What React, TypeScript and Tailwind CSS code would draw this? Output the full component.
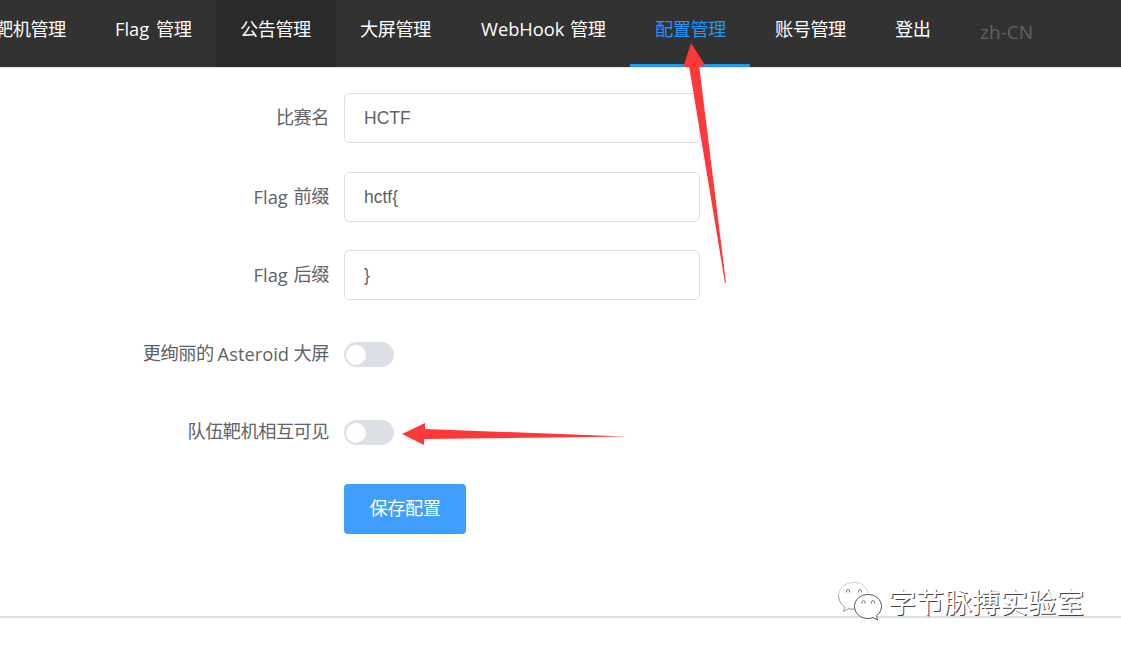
import React from "react";

const navItems = [
  { label: "靶机管理", box: "w-[121px] pl-[25px]" },
  { label: "Flag 管理", latin: "Flag", rest: "管理", latinBox: "w-[38px]", box: "w-[125px] pl-[24px]" },
  { label: "公告管理", box: "w-[120px] pl-[24px] bg-[#2a2a2a]" },
  { label: "大屏管理", box: "w-[120px] pl-[24px]" },
  { label: "WebHook 管理", latin: "WebHook", rest: "管理", latinBox: "w-[86px]", box: "w-[174px] pl-[25px]" },
  { label: "配置管理", box: "w-[120px] pl-[25px] border-b-[3px] border-[#2196f3] text-[#2196f3]" },
  { label: "账号管理", box: "w-[120px] pl-[25px]" },
  { label: "登出", box: "w-[85px] pl-[25px]" },
];

function Latin({ text, box }: { text: string; box: string }) {
  return <span className={`inline-block whitespace-nowrap font-['Open_Sans','Noto_Sans',sans-serif] text-[18.3px] tracking-normal ${box}`}>{text}</span>;
}

function Label({ children }: { children: React.ReactNode }) {
  return (
    <div className="flex h-[50px] w-[344px] shrink-0 items-center justify-end whitespace-nowrap pb-px pr-[15px]">
      {children}
    </div>
  );
}

function TextField({ value }: { value: string }) {
  return (
    <input
      readOnly
      value={value}
      className="h-[50px] w-[356px] rounded-[5px] border border-[#dcdfe6] bg-white px-[19px] font-['Liberation_Sans',Arial,sans-serif] text-[17.5px] tracking-normal text-[#606266] outline-none"
    />
  );
}

function Toggle() {
  return (
    <button role="switch" aria-checked="false" className="mt-px flex h-[25px] w-[50px] items-center rounded-full bg-[#dcdfe6] pl-[2px]">
      <span className="size-5 rounded-full bg-white" />
    </button>
  );
}

export default function App() {
  return (
    <div className="relative flex h-[652px] w-[1121px] flex-col overflow-hidden bg-white font-['Open_Sans','Noto_Sans_CJK_SC',sans-serif] text-[18.2px] tracking-[-0.5px] text-[#606266]">
      <header className="h-[68px] shrink-0 border-b border-[#e6e6e6] bg-[#323232] bg-clip-padding">
        <nav className="-ml-[30px] flex h-[67px] text-white">
          {navItems.map((item) => (
            <a key={item.label} className={`flex h-[67px] shrink-0 whitespace-nowrap leading-[58px] ${item.box}`}>
              {item.latin ? (
                <>
                  <Latin text={item.latin} box={item.latinBox} />
                  <span className="ml-[3px]">{item.rest}</span>
                </>
              ) : (
                item.label
              )}
            </a>
          ))}
          <span className="pl-[25px] text-[19px] leading-[64px] tracking-normal text-[#606266]">zh-CN</span>
        </nav>
      </header>

      <main className="flex h-[548px] shrink-0 flex-col pt-[25px]">
        <div className="flex h-[79px]">
          <Label>比赛名</Label>
          <TextField value="HCTF" />
        </div>
        <div className="flex h-[78px]">
          <Label>
            <Latin text="Flag" box="w-[40px]" />前缀
          </Label>
          <TextField value="hctf{" />
        </div>
        <div className="flex h-[79px]">
          <Label>
            <Latin text="Flag" box="w-[40px]" />后缀
          </Label>
          <TextField value="}" />
        </div>
        <div className="flex h-[78px]">
          <Label>
            更绚丽的
            <Latin text="Asteroid" box="ml-[4px] w-[76px]" />
            大屏
          </Label>
          <div className="flex h-[50px] items-center">
            <Toggle />
          </div>
        </div>
        <div className="flex h-[77px]">
          <Label>队伍靶机相互可见</Label>
          <div className="flex h-[50px] items-center">
            <Toggle />
          </div>
        </div>
        <button className="ml-[344px] h-[50px] w-[122px] shrink-0 rounded-[4px] bg-[#409eff] text-white">保存配置</button>
      </main>
      <div className="h-[2px] shrink-0 bg-[#dcdfe6]" />

      <svg className="pointer-events-none absolute inset-0" width="1121" height="652" viewBox="0 0 1121 652" fill="#fd3838">
        <path d="M691 43L705 65L699.3 67L726 283H725L689.2 67H683.3Z" />
        <path d="M402 434L425 423V429L626 436.5L424 439V445Z" />
      </svg>

      <div className="absolute left-[836px] top-[580px] flex">
        <svg width="48" height="42" viewBox="0 0 48 42" fill="white" stroke="#555" strokeWidth="1">
          <path d="M18 2.5C8.500 2.500 2.500 8.700 2.500 16C2.500 20.500 5 24.500 9 27L7.500 31.500L13 28.500C15 29.300 17 29.500 19 29C30 28 33 22 33 15C32 8 26 2.500 18 2.500Z" stroke="#d0d0d0" />
          <path d="M2.500 14C2.500 20.500 5 24.500 9 27L7.500 31.500L13 28.500C15 29.300 17 29.500 19 29" fill="none" stroke="#aaa" />
          <path d="M32 14.500C24 14.500 18.500 20 18.500 26.500C18.500 33.500 24.500 38.500 32 38.500C34 38.500 35.500 38.200 37 37.500L41.500 40L40.500 35.500C44 33 45.500 30 45.500 26.500C45.500 20 40 14.500 32 14.500Z" />
          <g fill="none" stroke="#777">
            <path d="M10.500 12.500Q10 9.500 12 9.500T13.500 12.500M22.500 12.500Q22 9.500 24 9.500T25.500 12.500M26 23.500Q25.500 20.500 27.500 20.500T29 23.500M35.500 23.500Q35 20.500 37 20.500T38.500 23.500" />
          </g>
        </svg>
        <span className="ml-[4px] whitespace-nowrap font-['Noto_Sans_CJK_SC',sans-serif] text-[28px] leading-[42px] tracking-normal text-white [text-shadow:1px_1px_0_#444]">字节脉搏实验室</span>
      </div>
    </div>
  );
}
